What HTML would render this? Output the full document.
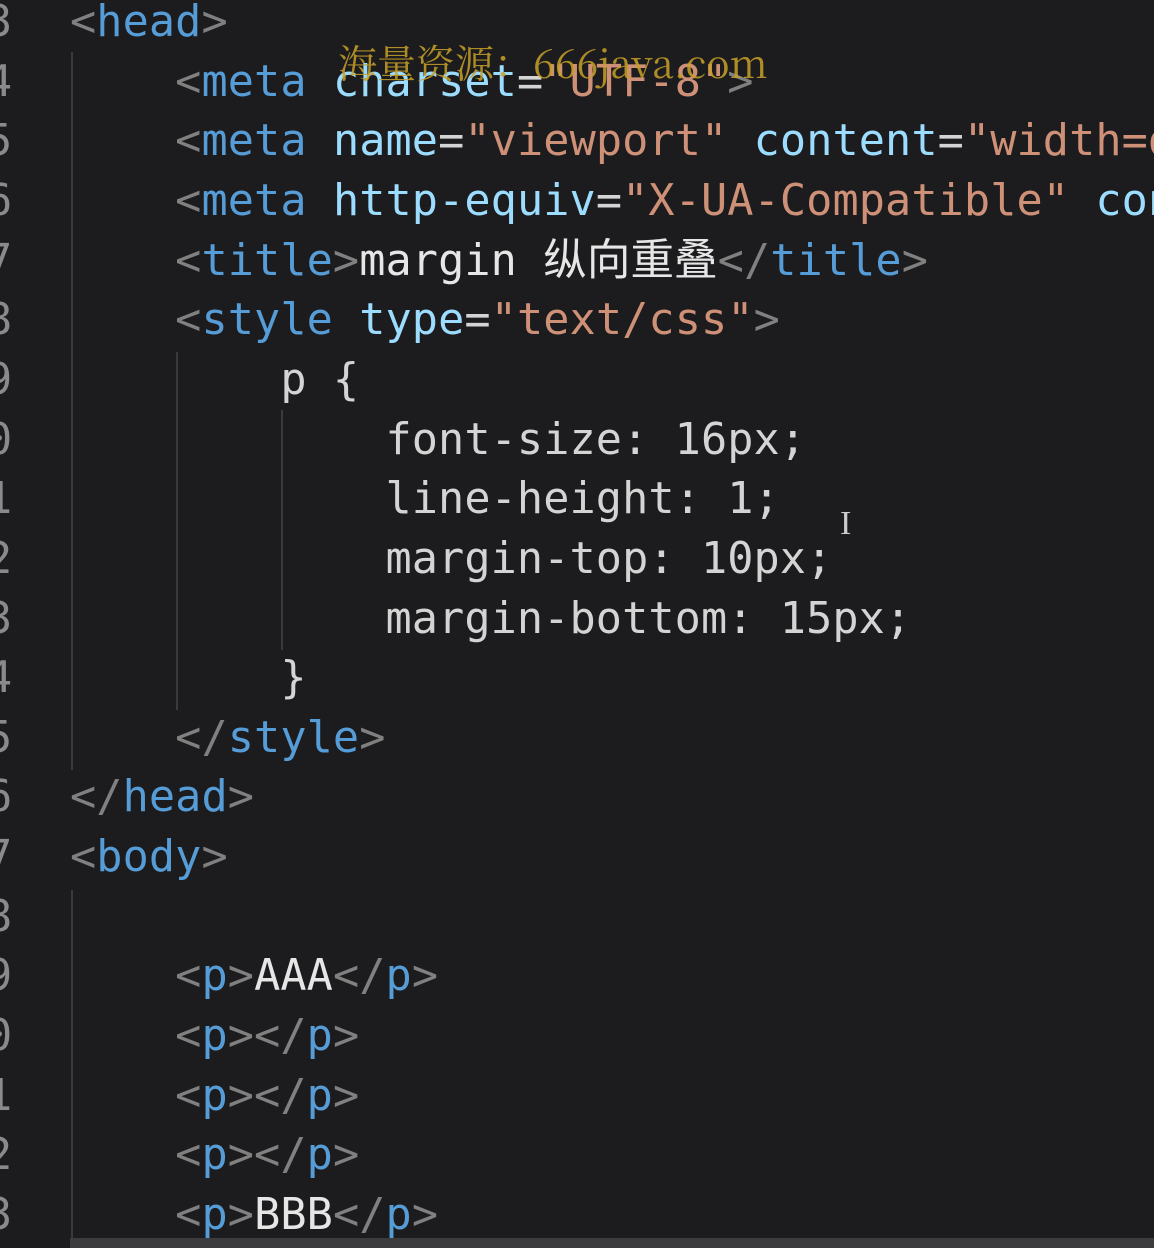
<!DOCTYPE html>
<html style="overflow:hidden"><head><meta charset="utf-8"><style>
html,body{margin:0;width:1154px;height:1248px;overflow:hidden}
body{background:#1c1c1e;position:relative;font-family:"DejaVu Sans Mono","Liberation Mono","Noto Sans CJK SC",monospace;font-size:43.5px;}
.l{position:absolute;left:70px;right:0;overflow:hidden;height:60px;line-height:60px;white-space:pre;color:#d4d4d4;letter-spacing:0.1px}
.n{position:absolute;left:-14px;height:60px;line-height:60px;color:#8a8a8a}
.b{color:#808080}.t{color:#569cd6}.a{color:#9cdcfe}.s{color:#ce9178}.w{color:#e6e6e6}
.g{position:absolute;width:2px;background:#3a3a3a}
.wm{position:absolute;left:338px;top:34px;font-family:"Noto Serif CJK SC","Liberation Serif",serif;font-size:39px;color:rgba(200,160,40,0.85);white-space:nowrap}
</style></head><body>
<div class="g" style="left:71px;top:52px;height:718px"></div>
<div class="g" style="left:176px;top:352px;height:358px"></div>
<div class="g" style="left:281px;top:410px;height:240px"></div>
<div class="g" style="left:71px;top:890px;height:350px"></div>
<div style="position:absolute;left:70px;top:1238px;width:1084px;height:10px;background:#3c3c3e"></div>

<div class="n" style="top:-8px">3</div><div class="n" style="top:52px">4</div><div class="n" style="top:111px">5</div><div class="n" style="top:171px">6</div><div class="n" style="top:231px">7</div><div class="n" style="top:290px">8</div><div class="n" style="top:350px">9</div><div class="n" style="top:410px">0</div><div class="n" style="top:469px">1</div><div class="n" style="top:529px">2</div><div class="n" style="top:589px">3</div><div class="n" style="top:648px">4</div><div class="n" style="top:708px">5</div><div class="n" style="top:767px">6</div><div class="n" style="top:827px">7</div><div class="n" style="top:887px">8</div><div class="n" style="top:946px">9</div><div class="n" style="top:1006px">0</div><div class="n" style="top:1066px">1</div><div class="n" style="top:1125px">2</div><div class="n" style="top:1185px">3</div>

<div class="l" style="top:-8px"><span class="b">&lt;</span><span class="t">head</span><span class="b">&gt;</span></div>
<div class="l" style="top:52px">    <span class="b">&lt;</span><span class="t">meta</span> <span class="a">charset</span>=<span class="s">"UTF-8"</span><span class="b">&gt;</span></div>
<div class="l" style="top:111px">    <span class="b">&lt;</span><span class="t">meta</span> <span class="a">name</span>=<span class="s">"viewport"</span> <span class="a">content</span>=<span class="s">"width=device</span></div>
<div class="l" style="top:171px">    <span class="b">&lt;</span><span class="t">meta</span> <span class="a">http-equiv</span>=<span class="s">"X-UA-Compatible"</span> <span class="a">content</span></div>
<div class="l" style="top:231px">    <span class="b">&lt;</span><span class="t">title</span><span class="b">&gt;</span><span class="w">margin 纵向重叠</span><span class="b">&lt;/</span><span class="t">title</span><span class="b">&gt;</span></div>
<div class="l" style="top:290px">    <span class="b">&lt;</span><span class="t">style</span> <span class="a">type</span>=<span class="s">"text/css"</span><span class="b">&gt;</span></div>
<div class="l" style="top:350px">        p {</div>
<div class="l" style="top:410px">            font-size: 16px;</div>
<div class="l" style="top:469px">            line-height: 1;</div>
<div class="l" style="top:529px">            margin-top: 10px;</div>
<div class="l" style="top:589px">            margin-bottom: 15px;</div>
<div class="l" style="top:648px">        }</div>
<div class="l" style="top:708px">    <span class="b">&lt;/</span><span class="t">style</span><span class="b">&gt;</span></div>
<div class="l" style="top:767px"><span class="b">&lt;/</span><span class="t">head</span><span class="b">&gt;</span></div>
<div class="l" style="top:827px"><span class="b">&lt;</span><span class="t">body</span><span class="b">&gt;</span></div>
<div class="l" style="top:946px">    <span class="b">&lt;</span><span class="t">p</span><span class="b">&gt;</span><span class="w">AAA</span><span class="b">&lt;/</span><span class="t">p</span><span class="b">&gt;</span></div>
<div class="l" style="top:1006px">    <span class="b">&lt;</span><span class="t">p</span><span class="b">&gt;&lt;/</span><span class="t">p</span><span class="b">&gt;</span></div>
<div class="l" style="top:1066px">    <span class="b">&lt;</span><span class="t">p</span><span class="b">&gt;&lt;/</span><span class="t">p</span><span class="b">&gt;</span></div>
<div class="l" style="top:1125px">    <span class="b">&lt;</span><span class="t">p</span><span class="b">&gt;&lt;/</span><span class="t">p</span><span class="b">&gt;</span></div>
<div class="l" style="top:1185px">    <span class="b">&lt;</span><span class="t">p</span><span class="b">&gt;</span><span class="w">BBB</span><span class="b">&lt;/</span><span class="t">p</span><span class="b">&gt;</span></div>
<div style="position:absolute;left:840px;top:505px;color:#ccc;font-size:34px;font-family:'Liberation Serif',serif">I</div>
<div class="wm">海量资源：666java.com</div>
</body></html>
